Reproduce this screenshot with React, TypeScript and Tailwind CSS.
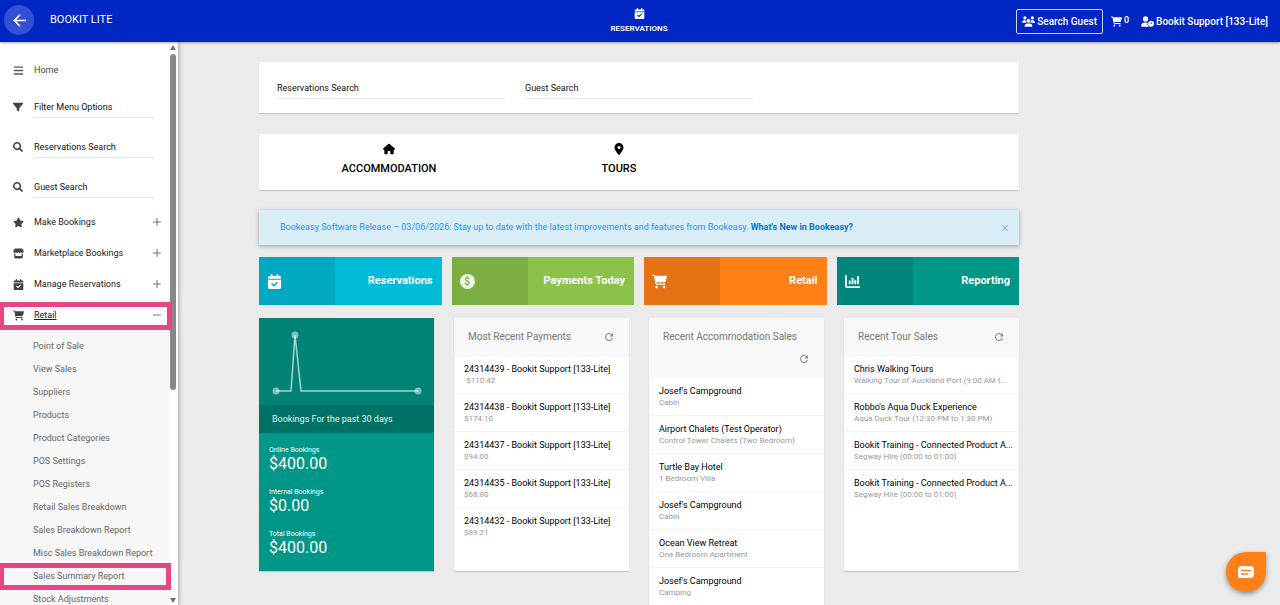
import type { ReactNode } from "react";
import { Minus, Plus } from "lucide-react";
import { FaSearch } from "react-icons/fa";
import {
    FaBars,
    FaCalendarCheck,
    FaCartShopping,
    FaChartColumn,
    FaFilter,
    FaHouse,
    FaLocationDot,
    FaStar,
    FaStore,
    FaUserClock,
    FaUsers,
} from "react-icons/fa6";
import { MdArrowBack, MdClose, MdRefresh } from "react-icons/md";

type Sale = { title: string; detail: string };

const payments: Sale[] = [
    { title: "24314439 - Bookit Support [133-Lite]", detail: "-$110.42" },
    { title: "24314438 - Bookit Support [133-Lite]", detail: "$174.10" },
    { title: "24314437 - Bookit Support [133-Lite]", detail: "$94.00" },
    { title: "24314435 - Bookit Support [133-Lite]", detail: "$68.80" },
    { title: "24314432 - Bookit Support [133-Lite]", detail: "$89.21" },
];

const accommodation: Sale[] = [
    { title: "Josef's Campground", detail: "Cabin" },
    { title: "Airport Chalets (Test Operator)", detail: "Control Tower Chalets (Two Bedroom)" },
    { title: "Turtle Bay Hotel", detail: "1 Bedroom Villa" },
    { title: "Josef's Campground", detail: "Cabin" },
    { title: "Ocean View Retreat", detail: "One Bedroom Apartment" },
    { title: "Josef's Campground", detail: "Camping" },
];

const tours: Sale[] = [
    { title: "Chris Walking Tours", detail: "Walking Tour of Auckland Port (9:00 AM t..." },
    { title: "Robbo's Aqua Duck Experience", detail: "Aqua Duck Tour (12:30 PM to 1:30 PM)" },
    { title: "Bookit Training - Connected Product A...", detail: "Segway Hire (00:00 to 01:00)" },
    { title: "Bookit Training - Connected Product A...", detail: "Segway Hire (00:00 to 01:00)" },
];

const retailLinks = [
    "Point of Sale",
    "View Sales",
    "Suppliers",
    "Products",
    "Product Categories",
    "POS Settings",
    "POS Registers",
    "Retail Sales Breakdown",
    "Sales Breakdown Report",
    "Misc Sales Breakdown Report",
    "Sales Summary Report",
    "Stock Adjustments",
];

const totals = [
    { label: "Online Bookings", value: "$400.00" },
    { label: "Internal Bookings", value: "$0.00" },
    { label: "Total Bookings", value: "$400.00" },
];

const Header = () => {
    return (
        <header className="relative z-20 grid h-[42px] shrink-0 grid-cols-[1fr_auto_1fr] items-center bg-[#0026c4] text-white shadow-[0_1px_2px_rgba(0,0,0,0.35)]">
            <div className="flex items-center gap-4 pb-0.5 pl-1">
                <button aria-label="Back" className="flex size-[30px] items-center justify-center rounded-full bg-[#3350d2]">
                    <MdArrowBack className="size-[19px]" />
                </button>
                <span className="text-[11px]">BOOKIT LITE</span>
            </div>
            <a href="#" className="flex flex-col items-center gap-1 pr-0.5 text-[8px] leading-3 font-semibold">
                <FaCalendarCheck className="size-[11px]" />
                RESERVATIONS
            </a>
            <div className="flex items-center justify-end pr-3 text-[10px] font-medium">
                <button className="mr-2 flex h-[25px] items-center gap-0.5 rounded-xs border border-white/80 px-[5px]">
                    <FaUsers className="size-[13px]" />
                    Search Guest
                </button>
                <a href="#" className="mr-3 flex items-center gap-0.5 text-[9px]">
                    <FaCartShopping className="size-[11px]" />
                    0
                </a>
                <a href="#" className="flex items-center gap-0.5">
                    <FaUserClock className="size-[13px]" />
                    Bookit Support [133-Lite]
                </a>
            </div>
        </header>
    );
};

const MenuSearch = ({ icon, label }: { icon: ReactNode; label: string }) => {
    return (
        <li className="flex h-10 items-center pr-[14px] pl-[13px]">
            <span className="w-[21px] text-[10px]">{icon}</span>
            <input
                aria-label={label}
                placeholder={label}
                className="h-[21px] min-w-0 flex-1 border-b border-gray-200 text-[9px] text-black outline-none placeholder:text-[#111]"
            />
        </li>
    );
};

const MenuGroup = ({ icon, label, open }: { icon: ReactNode; label: string; open?: boolean }) => {
    return (
        <button className="relative flex h-[31px] w-full items-center pr-[6px] pl-[13px] text-[9px]">
            <span className="w-[21px] text-[11px]">{icon}</span>
            <span className={open ? "text-[#222] underline" : "text-[#222]"}>{label}</span>
            {open ? (
                <Minus className="mb-0.5 ml-auto size-3 text-gray-500" />
            ) : (
                <Plus className="mb-0.5 ml-auto size-3 text-gray-500" />
            )}
            {open && <span className="absolute top-[2px] -left-px z-10 h-[28px] w-[173px] border-5 border-[#e94484]" />}
        </button>
    );
};

const Sidebar = () => {
    return (
        <aside className="relative z-10 flex w-[178px] shrink-0 overflow-hidden bg-white text-[#444] shadow-[1px_0_4px_rgba(0,0,0,0.3)]">
            <nav className="min-w-0 flex-1">
                <ul className="pt-3">
                    <li>
                        <a href="#" className="flex h-[33px] items-center pl-[13px] text-[9px]">
                            <span className="w-[21px] text-[11px] text-[#555]"><FaBars /></span>
                            Home
                        </a>
                    </li>
                    <MenuSearch icon={<FaFilter />} label="Filter Menu Options" />
                    <MenuSearch icon={<FaSearch />} label="Reservations Search" />
                    <MenuSearch icon={<FaSearch />} label="Guest Search" />
                    <li><MenuGroup icon={<FaStar />} label="Make Bookings" /></li>
                    <li><MenuGroup icon={<FaStore />} label="Marketplace Bookings" /></li>
                    <li><MenuGroup icon={<FaCalendarCheck />} label="Manage Reservations" /></li>
                    <li>
                        <MenuGroup icon={<FaCartShopping />} label="Retail" open />
                        <ul className="bg-[#f7f7f7] pt-1 text-[9px] text-[#666]">
                            {retailLinks.map((link) => (
                                <li key={link} className="relative">
                                    <a href="#" className="flex h-[23px] items-center pl-[33px] whitespace-nowrap">{link}</a>
                                    {link === "Sales Summary Report" && (
                                        <span className="absolute -top-[2px] -left-px z-10 h-[27px] w-[172px] border-5 border-[#e94484]" />
                                    )}
                                </li>
                            ))}
                        </ul>
                    </li>
                </ul>
            </nav>
            <div className="flex w-[9px] flex-col items-center pt-[3px] pr-px pb-[2px]">
                <span className="border-x-3 border-b-5 border-x-transparent border-b-gray-500" />
                <span className="mt-1 h-[336px] w-[6px] rounded-full bg-[#888]" />
                <span className="mt-auto border-x-3 border-t-5 border-x-transparent border-t-gray-500" />
            </div>
        </aside>
    );
};

const Tile = ({ icon, label, color }: { icon: ReactNode; label: string; color: string }) => {
    return (
        <a href="#" className={`flex h-12 items-center text-white ${color}`}>
            <span className="flex h-full w-[76px] items-center bg-black/10 pl-2 text-[15px]">{icon}</span>
            <span className="flex-1 pr-[9px] text-right text-[11px] font-bold">{label}</span>
        </a>
    );
};

const SalesCard = ({ title, sales, wrap }: { title: string; sales: Sale[]; wrap?: boolean }) => {
    return (
        <section className="min-h-[253px] min-w-0 bg-white shadow-[0_1px_1px_rgba(0,0,0,0.15)]">
            <div className="flex flex-wrap items-center justify-between border-b border-gray-100 bg-[#f8f8f8] pt-2 pr-[14px] pb-[7px] pl-[14px] text-[#777]">
                <h2 className={`text-[10px] leading-[22px] ${wrap ? "w-full" : ""}`}>{title}</h2>
                <button aria-label={`Refresh ${title}`} className="ml-auto flex h-[22px] items-center text-[#888]">
                    <MdRefresh className="size-3" />
                </button>
            </div>
            <ul>
                {sales.map((sale, i) => (
                    <li key={i} className="flex h-[38px] flex-col justify-center border-b border-gray-100 pr-1 pl-[10px] whitespace-nowrap last:border-b-0">
                        <p className="text-[9px] leading-3 text-black">{sale.title}</p>
                        <p className="text-[8px] leading-3 text-[#999]">{sale.detail}</p>
                    </li>
                ))}
            </ul>
        </section>
    );
};

const BookingsCard = () => {
    return (
        <section className="h-[253px] bg-[#009688] text-white shadow-[0_1px_1px_rgba(0,0,0,0.15)]">
            <div className="h-[87px] bg-[#008375]">
                <svg viewBox="0 0 175 87" className="h-full w-full" fill="none">
                    <path d="M17 73H32L36 17L42 73H159" stroke="#a6d4cf" strokeWidth="1.5" />
                    <g fill="#fff" fillOpacity="0.5">
                        <circle cx="17" cy="73" r="3.5" />
                        <circle cx="36" cy="17" r="3.5" />
                        <circle cx="159" cy="73" r="3.5" />
                    </g>
                </svg>
            </div>
            <h2 className="bg-[#007165] pl-[13px] text-[9px] leading-7 text-white/90">Bookings For the past 30 days</h2>
            <dl className="pt-3 pl-[10px]">
                {totals.map((total) => (
                    <div key={total.label} className="h-[42px]">
                        <dt className="text-[7px] leading-[10px]">{total.label}</dt>
                        <dd className="text-base leading-[18px]">{total.value}</dd>
                    </div>
                ))}
            </dl>
        </section>
    );
};

const DollarCoin = () => {
    return (
        <span className="flex size-[15px] items-center justify-center rounded-full bg-white/90 text-[10px] font-medium text-[#7cac41]">
            $
        </span>
    );
};

const App = () => {
    return (
        <div className="flex h-screen flex-col overflow-hidden bg-[#ebebeb] font-['Roboto',sans-serif]">
            <Header />
            <div className="flex min-h-0 flex-1">
                <Sidebar />
                <main className="min-w-0 flex-1 overflow-hidden pr-[180px]">
                    <div className="mx-auto max-w-[760px] pt-5">
                        <div className="flex h-[51px] gap-5 bg-white px-[18px] pt-4 shadow-[0_1px_1px_rgba(0,0,0,0.15)]">
                            {["Reservations Search", "Guest Search"].map((label) => (
                                <input
                                    key={label}
                                    aria-label={label}
                                    placeholder={label}
                                    className="h-[21px] w-[228px] border-b border-gray-200 text-[9px] outline-none placeholder:text-[#111]"
                                />
                            ))}
                        </div>
                        <div className="mt-[21px] flex h-14 bg-white pl-[15px] text-[11px] font-medium text-black shadow-[0_1px_1px_rgba(0,0,0,0.15)]">
                            <a href="#" className="flex w-[230px] flex-col items-center gap-[6px] pt-[9px]">
                                <FaHouse className="size-3" />
                                ACCOMMODATION
                            </a>
                            <a href="#" className="flex w-[230px] flex-col items-center gap-[6px] pt-[9px]">
                                <FaLocationDot className="size-3" />
                                TOURS
                            </a>
                        </div>
                        <div className="mt-5 flex h-[35px] items-center bg-[#d9edf7] pr-[9px] pl-[21px] text-[9px] text-[#2196f3] shadow-[0_1px_4px_rgba(0,0,0,0.35)]">
                            <p>
                                Bookeasy Software Release – 03/06/2026: Stay up to date with the latest improvements and features from Bookeasy.{" "}
                                <a href="#" className="font-bold text-[#0d73c9]">What's New in Bookeasy?</a>
                            </p>
                            <button aria-label="Close" className="ml-auto text-[#64b5f6]">
                                <MdClose className="size-[10px]" />
                            </button>
                        </div>
                        <div className="mt-3 grid grid-cols-4 gap-[10px]">
                            <Tile icon={<FaCalendarCheck />} label="Reservations" color="bg-[#00bcd8]" />
                            <Tile icon={<DollarCoin />} label="Payments Today" color="bg-[#8bc34a]" />
                            <Tile icon={<FaCartShopping />} label="Retail" color="bg-[#ff8017]" />
                            <Tile icon={<FaChartColumn />} label="Reporting" color="bg-[#009688]" />
                        </div>
                        <div className="mt-[13px] grid grid-cols-4 items-start gap-5">
                            <BookingsCard />
                            <SalesCard title="Most Recent Payments" sales={payments} />
                            <SalesCard title="Recent Accommodation Sales" sales={accommodation} wrap />
                            <SalesCard title="Recent Tour Sales" sales={tours} />
                        </div>
                    </div>
                </main>
            </div>
            <button
                aria-label="Open chat"
                className="fixed right-[14px] bottom-[13px] z-30 flex size-10 items-center justify-center rounded-full rounded-tr-md bg-[#ff8017] shadow-[0_2px_5px_rgba(0,0,0,0.4)]"
            >
                <svg viewBox="0 0 16 13" className="w-4" fill="none">
                    <path d="M4 0H12Q16 0 16 4V8Q16 12 12 12H1Q0 12 0 11V4Q0 0 4 0Z" fill="#fff" />
                    <path d="M3.5 4.5H12.5M3.5 8H10" stroke="#ff8017" strokeWidth="1.4" strokeLinecap="round" />
                </svg>
            </button>
        </div>
    );
};

export default App;
